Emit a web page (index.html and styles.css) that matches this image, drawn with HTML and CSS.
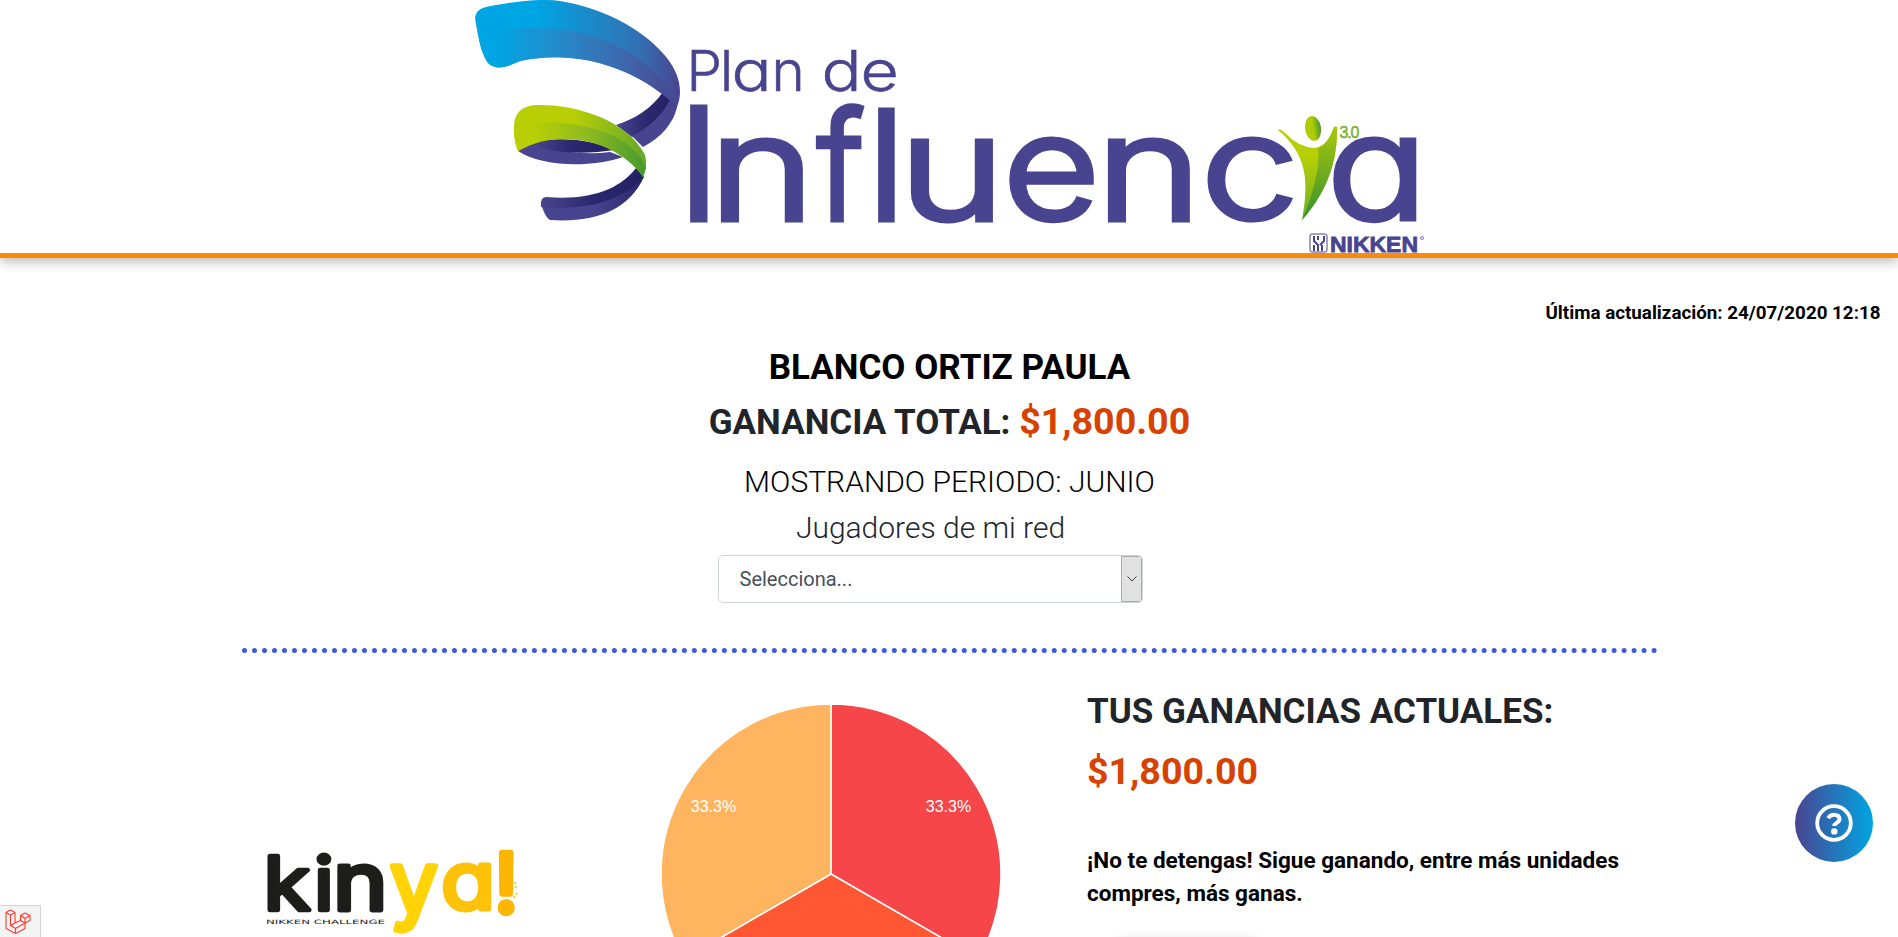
FILE: index.html
```html
<!DOCTYPE html>
<html lang="es">
<head>
<meta charset="utf-8">
<title>Plan de Influencia 3.0</title>
<link rel="stylesheet" href="styles.css">
</head>
<body>
<header class="header">
  <svg class="brand" viewBox="460 0 980 253" width="980" height="253">
    <defs>
      <linearGradient id="blueTop" x1="0" x2="1"><stop offset=".3" stop-color="#00a5e3"/><stop offset=".8" stop-color="#3370b3"/><stop offset="1" stop-color="#484490"/></linearGradient>
      <linearGradient id="blueLow" x1="0" x2="1"><stop offset=".1" stop-color="#00a5e3"/><stop offset=".4" stop-color="#248bcb"/><stop offset=".75" stop-color="#3e65ab"/><stop offset="1" stop-color="#4b448f"/></linearGradient>
      <linearGradient id="limeTop" x1="0" x2="1"><stop offset=".45" stop-color="#b9cf05"/><stop offset="1" stop-color="#64a82c"/></linearGradient>
      <linearGradient id="limeLow" x1="0" x2="1"><stop offset=".15" stop-color="#b9cf05"/><stop offset=".6" stop-color="#8ab822"/><stop offset="1" stop-color="#45982f"/></linearGradient>
      <linearGradient id="night" x1="0" x2="1"><stop offset="0" stop-color="#49448f"/><stop offset=".5" stop-color="#2b286f"/><stop offset="1" stop-color="#232162"/></linearGradient>
      <linearGradient id="dusk" x1="0" x2="1"><stop offset=".5" stop-color="#49448f"/><stop offset="1" stop-color="#29266c"/></linearGradient>
      <linearGradient id="arm" x1="0" y1="0" x2="0" y2="1"><stop offset=".3" stop-color="#b9cf05"/><stop offset="1" stop-color="#6fae28"/></linearGradient>
      <linearGradient id="armDark" x1="0" y1="0" x2="0" y2="1"><stop offset="0" stop-color="#a9c80c"/><stop offset="1" stop-color="#35902f"/></linearGradient>
      <linearGradient id="head" x1="0" x2="1"><stop offset=".5" stop-color="#b0cb08"/><stop offset="1" stop-color="#45982f"/></linearGradient>
    </defs>
    <path fill="url(#night)" d="M663 92C652 108 635 119 616 125L632 137C656 128 674 115 677 107Z"/>
    <path fill="#49448f" d="M671 98C663 114 650 127 632 136L643 147C662 137 674 122 677 107Z"/>
    <path fill="#49448f" d="M518 151L532 143Q575 157 610 152L623 157C590 168 543 167 518 151Z"/>
    <path fill="url(#night)" d="M531 143C550 137 588 137 614 150C589 154 551 155 531 143Z"/>
    <path fill="url(#dusk)" d="M541 204C543 210 546 218 550 220C594 223 628 211 644 177L637 173C617 203 583 210 541 204Z"/>
    <path fill="url(#night)" d="M636 168C621 188 592 201 546 197Q540 197 541 207C580 211 620 203 644 177Z"/>
    <path fill="url(#blueTop)" d="M475 18Q476 9 486 7C510 2 540-2 560 1C610 9 648 34 667 58C680 75 683 92 677 107C640 70 580 48 520 61L508 66Q495 70 488 63Q480 52 475 18Z"/>
    <path fill="url(#blueLow)" d="M478 32C515 26 560 26 590 35C630 47 668 76 677 107C640 70 580 48 520 61L508 66Q495 70 488 63Q480 52 478 32Z"/>
    <path fill="url(#limeTop)" d="M514 125C515 111 524 105 538 105C575 104 628 120 645 155Q648 166 643 177C624 147 568 122 518 151Q513 138 514 125Z"/>
    <path fill="url(#limeLow)" d="M514 126C560 116 630 127 646 168L643 177C620 143 562 126 518 151Q513 138 514 126Z"/>
    <g class="brand-small">
      <text transform="translate(686.500 91)">P</text>
      <text transform="translate(720 91)">l</text>
      <text transform="translate(731.500 91) scale(1.18 1)">a</text>
      <text transform="translate(771.500 91)">n</text>
      <text transform="translate(821.500 91) scale(1.18 1)">d</text>
      <text transform="translate(860.500 91) scale(1.17 1)">e</text>
    </g>
    <g class="brand-big">
      <text class="cap" transform="translate(676.500 219.500) scale(1.1 1)">I</text>
      <text transform="translate(709 219.800) scale(1.24 1)">n</text>
      <text class="tall" transform="translate(817 219.500) scale(.9 1)">f</text>
      <text class="tall" transform="translate(867 219.500) scale(1.1 1)">l</text>
      <text transform="translate(899 219.800) scale(1.24 1)">u</text>
      <text transform="translate(1003 219.200) scale(1.15 1)">e</text>
      <text transform="translate(1096 219.800) scale(1.24 1)">n</text>
      <text transform="translate(1201 219.200) scale(1.2 1)">c</text>
      <text transform="translate(1327 219.200) scale(1.15 1)">a</text>
    </g>
    <path fill="url(#arm)" d="M1278 130Q1280 128 1284 132Q1298 147 1314 148Q1327 147 1334 127Q1338 125 1337 131C1337 171 1320 200 1302 220C1310 177 1305 153 1278 130Z"/>
    <path fill="url(#armDark)" d="M1318 148Q1328 145 1334 127Q1338 125 1337 131C1337 171 1320 200 1302 220Q1321 175 1318 148Z"/>
    <ellipse cx="1313" cy="128.500" rx="8" ry="12.500" fill="url(#head)" transform="rotate(-8 1313 128)"/>
    <text class="brand-version" x="1339.500" y="138" textLength="20">3.0</text>
    <rect x="1310" y="234" width="17" height="18" rx="2" fill="none" stroke="#49448f"/>
    <path d="M1314 236V241L1318 245V251M1324 236V241L1320 245M1318 236V240M1314 245V251M1322 245V251" fill="none" stroke="#49448f" stroke-width="2"/>
    <text class="brand-owner" x="1330" y="252" textLength="88" lengthAdjust="spacingAndGlyphs">NIKKEN</text>
    <circle cx="1422" cy="238" r="1.500" fill="none" stroke="#49448f" stroke-width=".7"/>
  </svg>
</header>

<main class="page">
  <p class="updated">Última actualización: 24/07/2020 12:18</p>
  <section class="summary">
    <h1 class="name">BLANCO ORTIZ PAULA</h1>
    <p class="total">GANANCIA TOTAL: <span class="amount">$1,800.00</span></p>
    <p class="period">MOSTRANDO PERIODO: JUNIO</p>
    <div class="network">
      <p class="network-label">Jugadores de mi red</p>
      <div class="select"><span class="select-text">Selecciona...</span>
        <span class="select-arrow"><svg width="10" height="6" viewBox="0 0 10 6"><path d="M.5.5L5 5L9.500.500" fill="none" stroke="#444"/></svg></span>
      </div>
    </div>
  </section>
  <section class="results">
    <div class="challenge">
      <svg width="300" height="110" viewBox="251 840 300 110">
        <g class="kin">
          <text transform="translate(264.500 909.500) scale(1.15 1)">k</text>
          <text transform="translate(315 909.500) scale(1.1 1)">i</text>
          <text transform="translate(334 909.500) scale(1.25 1.08)">n</text>
        </g>
        <g class="kin">
          <text class="ya-1" transform="translate(391 913) scale(1.15 1.17)">y</text>
          <text class="ya-2" transform="translate(442 909) scale(1.2 1.08)">a</text>
          <text class="ya-3" transform="translate(495.500 912) scale(1.1 1.1)">!</text>
        </g>
        <text class="kin-sub" x="267" y="924" textLength="119" lengthAdjust="spacingAndGlyphs">NIKKEN CHALLENGE</text>
        <path d="M516 882L517 888M518 893L514 899" stroke="#fbb900" stroke-width="1.500" stroke-dasharray="2 2"/>
      </svg>
    </div>
    <div class="chart">
      <svg width="342" height="342" viewBox="-171 -171 342 342">
        <g stroke="#fff" stroke-width="1.500">
          <path fill="#f7464a" d="M0 0V-170A170 170 0 0 1 147.220 85Z"/>
          <path fill="#ff5733" d="M0 0L147.220 85A170 170 0 0 1-147.220 85Z"/>
          <path fill="#ffb55f" d="M0 0L-147.220 85A170 170 0 0 1 0-170Z"/>
        </g>
        <text class="slice" x="117.500" y="-62">33.3%</text>
        <text class="slice" x="-117.500" y="-62">33.3%</text>
      </svg>
    </div>
    <div class="earnings">
      <h2 class="earnings-title">TUS GANANCIAS ACTUALES:</h2>
      <p class="earnings-amount">$1,800.00</p>
      <p class="earnings-note">¡No te detengas! Sigue ganando, entre más unidades<br>compres, más ganas.</p>
      <div class="card"></div>
    </div>
  </section>
</main>

<div class="help">
  <svg width="38" height="38" viewBox="0 0 38 38"><circle cx="19" cy="19" r="16.800" fill="none" stroke="#fff" stroke-width="3.800"/><path d="M13.200 14.300C16.200 9.200 24.500 10 24.500 15.100C24.500 19 19.300 18.800 19.300 22" fill="none" stroke="#fff" stroke-width="4"/><circle cx="19.300" cy="27.400" r="3.200" fill="#fff"/></svg>
</div>
<div class="debug">
  <svg width="26" height="26" viewBox="0 0 26 26" fill="none" stroke="#ff3b30" stroke-width="1.100" stroke-linejoin="round"><path d="M1 3.500L5.500 1L10 3.500L5.500 6ZM1 3.500V19.500L10.500 24.500L20 19.500V14L10.500 19.500V24.500M5.500 6V16.500L10.500 19.500M10 3.500V14L5.500 16.500M15.500 6.500L20 4L25 6.500L20 9.500ZM15.500 6.500V11.500L20 14L25 11.500V6.500M20 9.500V14M10 14L15.500 11.500"/></svg>
</div>
</body>
</html>
```
FILE: styles.css
```css
* { box-sizing: border-box; }
body { margin: 0; height: 937px; overflow: hidden; background: #fff; color: #212529; font-family: Roboto, sans-serif; }
h1, h2, p { margin: 0; }

.header { height: 258px; display: flex; justify-content: center; border-bottom: 5px solid #ff8c00; box-shadow: 0 3px 12px rgba(0, 0, 0, .3); }
.brand { display: block; margin-left: 2px; }
.brand text { fill: #49448f; font-family: Inter, sans-serif; font-feature-settings: "cv11"; }
.brand-small { font-size: 56.500px; font-weight: 300; stroke: #49448f; stroke-width: .6; }
.brand-big { font-size: 145px; font-weight: 300; stroke: #49448f; stroke-width: 5; }
.brand-big .cap { font-size: 155px; }
.brand-big .tall { font-size: 151px; }
.brand .brand-version { font: 400 16px "Liberation Sans", sans-serif; fill: #74ae28; stroke: #74ae28; stroke-width: .4; }
.brand .brand-owner { font: 700 22px "Liberation Sans", sans-serif; stroke: #49448f; stroke-width: .8; }

.page { height: 679px; padding-top: 41px; overflow: hidden; }
.updated { padding-right: 17.500px; text-align: right; color: #000; font-size: 18.800px; font-weight: 700; line-height: 29px; }
.summary { padding: 13px 0 45px 1px; display: flex; flex-direction: column; align-items: center; }
.name { color: #000; font-size: 35px; line-height: 54px; }
.total { height: 54px; font-size: 35px; font-weight: 700; line-height: 56px; }
.amount { color: #d84200; font-size: 37.600px; line-height: 1; }
.period { margin-top: 10px; color: #000; font-size: 30px; font-weight: 300; line-height: 46px; }
.network { width: 425px; margin-right: 38px; }
.network-label { font-size: 30px; font-weight: 300; line-height: 46px; text-align: center; }
.select { height: 48px; margin-top: 4px; border: 1px solid #ced4da; border-radius: 5px; display: flex; overflow: hidden; justify-content: space-between; align-items: stretch; }
.select-text { padding-left: 20.500px; color: #495057; font-size: 20px; line-height: 46px; }
.select-arrow { width: 21px; display: flex; align-items: center; justify-content: center; background: #e1e1e1; border: 1px solid #adadad; }

.results { position: relative; left: 1px; width: 1416px; margin: 0 auto; padding-left: 8px; border-top: 5px dotted #3b5bdb; display: grid; grid-template-columns: 410px 427px 1fr; }
.challenge { padding-top: 187px; }
.chart { padding-top: 50px; }
.slice { fill: #fff; font: 16px "Liberation Sans", sans-serif; text-anchor: middle; }
.kin { fill: #1d1d1b; stroke: #1d1d1b; font: 400 74px Inter, sans-serif; font-feature-settings: "cv11"; stroke-width: 4.500; stroke-linejoin: round; }
.ya-1 { fill: #ffd306; stroke: #ffd306; }
.ya-2 { fill: #fec20a; stroke: #fec20a; }
.ya-3 { fill: #fcb503; stroke: #fcb503; stroke-width: 6; }
.kin-sub { font: 6px "DejaVu Sans", sans-serif; fill: #1d1d1b; }
.earnings-title { margin-top: 29px; font-size: 35px; line-height: 60px; }
.earnings-amount { color: #d84200; font-size: 37.600px; font-weight: 700; line-height: 59px; }
.earnings-note { margin-top: 43px; color: #000; font-size: 22.500px; font-weight: 700; line-height: 33px; white-space: nowrap; }
.card { width: 136px; height: 50px; margin: 30px 0 0 32px; box-shadow: 0 0 10px rgba(0, 0, 0, .15); }

.help { position: fixed; left: 1795px; top: 784px; width: 78px; height: 78px; border-radius: 50%; display: flex; align-items: center; justify-content: center; background: linear-gradient(90deg, #4a4590, #00a5e3); }
.debug { position: fixed; left: 0; bottom: 0; width: 41px; height: 32px; padding: 3px 0 0 5px; background: #f4f4f4; border: 1px solid #d5d5d5; border-width: 1px 1px 0 0; }
```
